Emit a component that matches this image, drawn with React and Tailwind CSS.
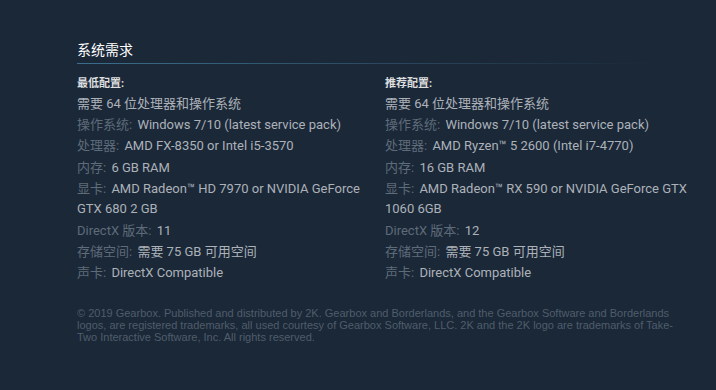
const minimum = [
  { label: '操作系统:', value: 'Windows 7/10 (latest service pack)' },
  { label: '处理器:', value: 'AMD FX-8350 or Intel i5-3570' },
  { label: '内存:', value: '6 GB RAM' },
  { label: '显卡:', value: 'AMD Radeon™ HD 7970 or NVIDIA GeForce GTX 680 2 GB' },
  { label: 'DirectX 版本:', value: '11' },
  { label: '存储空间:', value: '需要 75 GB 可用空间' },
  { label: '声卡:', value: 'DirectX Compatible' },
];

const recommended = [
  { label: '操作系统:', value: 'Windows 7/10 (latest service pack)' },
  { label: '处理器:', value: 'AMD Ryzen™ 5 2600 (Intel i7-4770)' },
  { label: '内存:', value: '16 GB RAM' },
  { label: '显卡:', value: 'AMD Radeon™ RX 590 or NVIDIA GeForce GTX 1060 6GB' },
  { label: 'DirectX 版本:', value: '12' },
  { label: '存储空间:', value: '需要 75 GB 可用空间' },
  { label: '声卡:', value: 'DirectX Compatible' },
];

function ReqColumn({ title, items }) {
  return (
    <div>
      <div className="text-[11px] font-bold leading-[16px] text-[#dcdedf]">{title}</div>
      <ul className="mt-[2px] text-[13px] leading-[20px] text-[#acb2b8]">
        <li className="mb-px">需要 64 位处理器和操作系统</li>
        {items.map((it, i) => (
          <li key={i} className="mb-[1.4px]">
            <span className="mr-[2px] text-[#5e6b78]">{it.label}</span> {it.value}
          </li>
        ))}
      </ul>
    </div>
  );
}

export default function App() {
  return (
    <div
      className="min-h-screen bg-[#1b2838] pl-[77px] pr-[20px] pt-[40px]"
      style={{ fontFamily: 'Roboto, "Noto Sans CJK SC", sans-serif' }}
    >
      <h2 className="text-[14px] leading-[20px] text-white">系统需求</h2>
      <div className="mt-[3px] h-px w-[576px] bg-gradient-to-r from-[#3b6e8c] to-transparent" />

      <div className="mt-[12px] grid grid-cols-[300px_312px] gap-x-[8px]">
        <ReqColumn title="最低配置:" items={minimum} />
        <ReqColumn title="推荐配置:" items={recommended} />
      </div>

      <p
        className="mt-[22px] w-[600px] text-[11px] leading-[12px] text-[#4f5d6a]"
        style={{ fontFamily: '"Liberation Sans", Arial, sans-serif' }}
      >
        © 2019 Gearbox. Published and distributed by 2K. Gearbox and Borderlands, and the Gearbox Software and Borderlands logos, are registered trademarks, all used courtesy of Gearbox Software, LLC. 2K and the 2K logo are trademarks of Take-Two Interactive Software, Inc. All rights reserved.
      </p>
    </div>
  );
}
